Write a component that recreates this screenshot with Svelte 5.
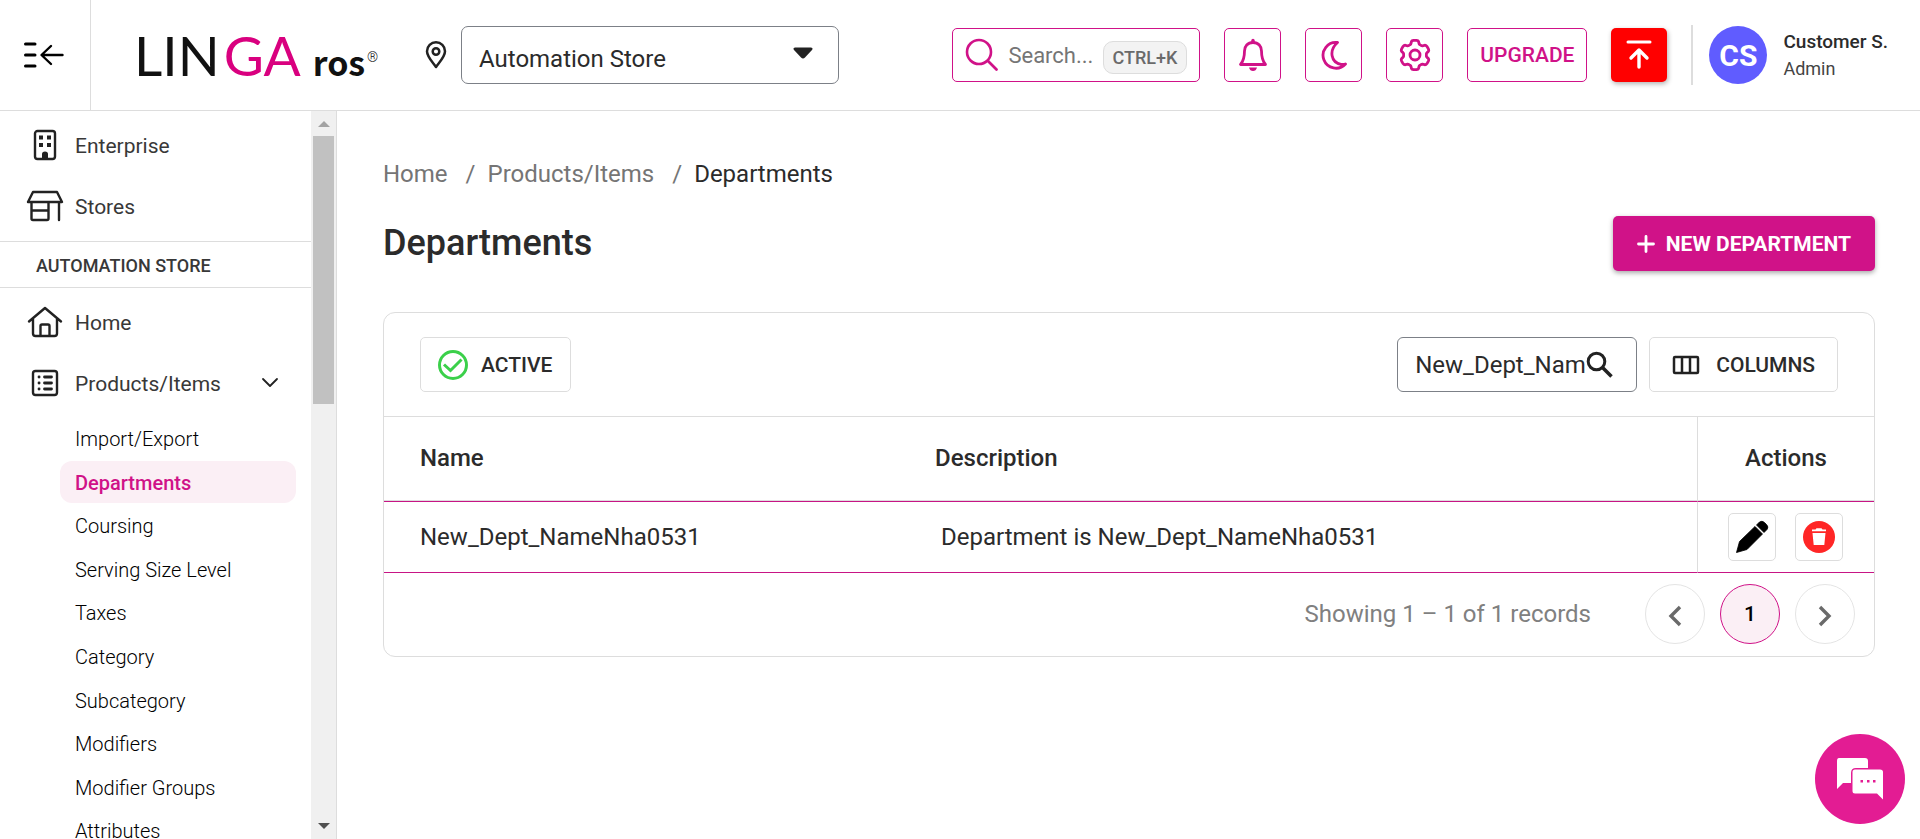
<script>
  const subItems = [
    'Import/Export',
    'Departments',
    'Coursing',
    'Serving Size Level',
    'Taxes',
    'Category',
    'Subcategory',
    'Modifiers',
    'Modifier Groups',
    'Attributes'
  ];
  const active = 'Departments';
  const rows = [
    { name: 'New_Dept_NameNha0531', description: 'Department is New_Dept_NameNha0531' }
  ];
  let filter = $state('New_Dept_NameNha0531');

  // Outline of a six-toothed gear with rounded teeth, centred on 17,17.
  const gear = Array.from({ length: 120 }, (_, i) => {
    const t = (i / 120) * Math.PI * 2;
    const r = 13 + 1.7 * Math.tanh(2.4 * Math.cos(6 * t) + 0.5);
    return `${(17 + r * Math.sin(t)).toFixed(2)} ${(17 - r * Math.cos(t)).toFixed(2)}`;
  }).join('L');
</script>

<div class="app">
  <header class="topbar">
    <button class="menu-toggle" aria-label="Collapse menu">
      <svg width="40" height="28" viewBox="0 0 40 28" fill="none" stroke="#000" stroke-linecap="round" stroke-linejoin="round">
        <path d="M1.5 3H11M1.5 14H11M1.5 25H11" stroke-width="3" />
        <path d="M38.5 14H18M27 5L17.5 14L27 23" stroke-width="2.4" />
      </svg>
    </button>

    <a class="logo" href="#home" aria-label="LINGA ros">
      <span class="logo-main">LIN<span class="pink">GA</span></span>
      <span class="logo-sub">ros</span>
      <span class="logo-reg">®</span>
    </a>

    <div class="store">
      <svg width="22" height="28" viewBox="0 0 22 28" fill="none" stroke="#222">
        <path d="M11 26C8 21.500 2 16 2 10.300A9 9 0 0 1 20 10.300C20 16 14 21.500 11 26Z" stroke-width="2.500" stroke-linejoin="round" />
        <circle cx="11" cy="10.500" r="3.300" stroke-width="2.500" />
      </svg>
      <div class="store-select">
        <select aria-label="Store">
          <option>Automation Store</option>
        </select>
        <svg class="caret" width="20" height="12" viewBox="0 0 20 12"><path d="M2 0.500H18Q20.500 1 19 3L12 10.500Q10 12.500 8 10.500L1 3Q-0.500 1 2 0.500Z" fill="#222" /></svg>
      </div>
    </div>

    <div class="tools">
      <button class="search">
        <svg width="34" height="34" viewBox="0 0 34 34" fill="none" stroke="#d01288" stroke-linecap="round">
          <circle cx="14" cy="14" r="12" stroke-width="2.600" />
          <path d="M23 23L31.500 31.500" stroke-width="2.800" />
        </svg>
        <span>Search...</span>
        <kbd>CTRL+K</kbd>
      </button>
      <button class="tool" aria-label="Notifications">
        <svg width="30" height="34" viewBox="0 0 30 34" fill="none" stroke="#d01288">
          <path d="M15 4.500C9.500 4.500 6.500 8.500 6.500 13C6.500 20 5.500 23 2.500 26.500H27.500C24.500 23 23.500 20 23.500 13C23.500 8.500 20.500 4.500 15 4.500Z" stroke-width="2.800" stroke-linejoin="round" />
          <path d="M15 2.500V4" stroke-width="3.400" stroke-linecap="round" />
          <path d="M11 29.500H19Q18 33 15 33Q12 33 11 29.500Z" fill="#d01288" stroke="none" />
        </svg>
      </button>
      <button class="tool" aria-label="Dark mode">
        <svg width="28" height="32" viewBox="0 0 28 32" fill="none" stroke="#d01288">
          <path d="M17.500 3.500A12.900 12.900 0 1 0 25.500 25Q23.500 25.800 21 25.300C11 23.500 8.500 11.500 17.500 3.500Z" stroke-width="2.800" stroke-linejoin="round" />
        </svg>
      </button>
      <button class="tool" aria-label="Settings">
        <svg width="34" height="34" viewBox="0 0 34 34" fill="none" stroke="#d01288" stroke-width="2.800" stroke-linejoin="round">
          <path d="M{gear}Z" />
          <circle cx="17" cy="17" r="5" />
        </svg>
      </button>
      <button class="upgrade">UPGRADE</button>
      <button class="upload" aria-label="Publish">
        <svg width="28" height="30" viewBox="0 0 28 30" fill="none" stroke="#fff" stroke-width="3" stroke-linecap="round" stroke-linejoin="round">
          <path d="M3 2H25" />
          <path d="M14 27V11M6 18L14 10L22 18" stroke-width="3.400" />
        </svg>
      </button>
      <div class="user">
        <span class="avatar">CS</span>
        <div class="who">
          <strong>Customer S.</strong>
          <span>Admin</span>
        </div>
      </div>
    </div>
  </header>

  <div class="body">
    <aside class="sidebar">
      <nav class="nav">
        <a class="item" href="#enterprise">
          <svg width="38" height="32" viewBox="0 0 38 32" fill="none" stroke="#222">
            <rect x="9" y="2" width="20" height="28" rx="2.500" stroke-width="2.400" />
            <path d="M13 6.500h4v4h-4zM21 6.500h4v4h-4zM13 14h4v4h-4zM21 14h4v4h-4zM16 30V25Q16 22.500 19 22.500Q22 22.500 22 25V30Z" fill="#222" stroke="none" />
          </svg>
          <span>Enterprise</span>
        </a>
        <a class="item" href="#stores">
          <svg width="38" height="32" viewBox="0 0 38 32" fill="none" stroke="#222" stroke-width="2.400" stroke-linejoin="round" stroke-linecap="round">
            <path d="M7 2H31L36 12H2ZM5.500 12.500V28.500Q5.500 30 7 30H21Q22.500 30 22.500 28.500V12.500M5.500 20.500H22.500M33 12.500V30" />
          </svg>
          <span>Stores</span>
        </a>
        <div class="section">AUTOMATION STORE</div>
        <a class="item" href="#home">
          <svg width="38" height="32" viewBox="0 0 38 32" fill="none" stroke="#222" stroke-width="2.400" stroke-linejoin="round" stroke-linecap="round">
            <path d="M3 15.500L19 2L35 15.500M7 13V27.500Q7 30 9.500 30H28.500Q31 30 31 27.500V13M14.500 30V20Q14.500 18.500 16 18.500H22Q23.500 18.500 23.500 20V30" />
          </svg>
          <span>Home</span>
        </a>
        <button class="item">
          <svg width="38" height="32" viewBox="0 0 38 32" fill="none" stroke="#222">
            <rect x="7" y="4" width="24" height="24" rx="2.500" stroke-width="2.400" />
            <path d="M18.500 10H25.500M18.500 16H25.500M18.500 22H25.500M13 10H13.100M13 16H13.100M13 22H13.100" stroke-width="2.800" stroke-linecap="round" />
          </svg>
          <span>Products/Items</span>
          <svg class="chev" width="18" height="12" viewBox="0 0 18 12" fill="none" stroke="#222" stroke-width="1.800" stroke-linecap="round" stroke-linejoin="round"><path d="M2 2L9 9L16 2" /></svg>
        </button>
        <ul class="sub">
          {#each subItems as item}
            <li><a href="#{item}" class:active={item === active}>{item}</a></li>
          {/each}
        </ul>
      </nav>
      <div class="scroll">
        <svg width="12" height="25" viewBox="0 0 12 25"><path d="M6 10L12 16H0Z" fill="#a3a3a3" /></svg>
        <div class="thumb"></div>
        <svg width="12" height="26" viewBox="0 0 12 26"><path d="M0 10H12L6 16Z" fill="#505050" /></svg>
      </div>
    </aside>

    <main class="content">
      <nav class="crumbs" aria-label="Breadcrumb">
        <a href="#home">Home</a><span class="sep">/</span><a href="#products">Products/Items</a><span class="sep">/</span><span class="here">Departments</span>
      </nav>

      <div class="heading">
        <h1>Departments</h1>
        <button class="primary">
          <svg width="18" height="18" viewBox="0 0 18 18" stroke="#fff" stroke-width="2.800" stroke-linecap="round"><path d="M9 1.500V16.500M1.500 9H16.500" /></svg>
          NEW DEPARTMENT
        </button>
      </div>

      <section class="card">
        <div class="toolbar">
          <button class="outline">
            <svg width="30" height="30" viewBox="0 0 30 30" fill="none" stroke="#3bd04a" stroke-width="3"><circle cx="15" cy="15" r="13.500" /><path d="M6 14.500L12.500 20.500L23.500 9.500" /></svg>
            ACTIVE
          </button>
          <div class="right">
            <label class="filter">
              <input type="text" aria-label="Search departments" bind:value={filter} />
              <svg width="28" height="28" viewBox="0 0 28 28" fill="none" stroke="#222"><circle cx="10.500" cy="10.500" r="8.300" stroke-width="3" /><path d="M16.500 16.500L25.500 25.500" stroke-width="3.600" /></svg>
            </label>
            <button class="outline columns">
              <svg width="28" height="20" viewBox="0 0 28 20" fill="none" stroke="#222" stroke-width="2.500"><rect x="2" y="2" width="24" height="16" rx="1" /><path d="M10 2V18M18 2V18" /></svg>
              COLUMNS
            </button>
          </div>
        </div>

        <table>
          <thead>
            <tr><th class="c-name">Name</th><th>Description</th><th class="c-act">Actions</th></tr>
          </thead>
          <tbody>
            {#each rows as row}
              <tr>
                <td>{row.name}</td>
                <td class="desc">{row.description}</td>
                <td class="c-act">
                  <div class="acts">
                    <button class="act" aria-label="Edit">
                      <svg width="34" height="34" viewBox="0 0 34 34"><path d="M1.500 32.500L4.500 21.500L20 6.500L27.500 14L12 29.500ZM21.500 5L24.500 2Q27 0.200 29.500 2.500L31.500 4.500Q34 7 32 9.500L29 12.500Z" fill="#000" stroke="#000" stroke-width="0.800" stroke-linejoin="round" /></svg>
                    </button>
                    <button class="act" aria-label="Delete">
                      <svg width="32" height="32" viewBox="0 0 32 32"><circle cx="16" cy="16" r="16" fill="#ff2626" /><path d="M9 8.500H12.500L13.500 7.200H18.500L19.500 8.500H23V10.300H9ZM9.500 12H22.500L21.300 24H10.700Z" fill="#fff" /></svg>
                    </button>
                  </div>
                </td>
              </tr>
            {/each}
          </tbody>
        </table>

        <div class="pager">
          <span class="count">Showing 1 – 1 of 1 records</span>
          <button class="page" aria-label="Previous page"><svg width="16" height="22" viewBox="0 0 16 22" fill="none" stroke="#6a6a6a" stroke-width="3.400"><path d="M13 2L4 11L13 20" /></svg></button>
          <button class="page current">1</button>
          <button class="page" aria-label="Next page"><svg width="16" height="22" viewBox="0 0 16 22" fill="none" stroke="#6a6a6a" stroke-width="3.400"><path d="M3 2L12 11L3 20" /></svg></button>
        </div>
      </section>
    </main>
  </div>

  <button class="chat" aria-label="Chat">
    <svg width="48" height="44" viewBox="0 0 48 44">
      <path d="M3 1H29Q32 1 32 4V11H20Q15 11 15 16V26H7L1 32V4Q1 1 3 1Z" fill="#fff" />
      <path d="M19 12.500H44Q47 12.500 47 15V42.500L41 36.500H19Q16.500 36.500 16.500 34V15Q16.500 12.500 19 12.500Z" fill="#fff" />
      <path d="M24.500 23h2.500v2.500h-2.500zM31 23h2.500v2.500h-2.500zM37 23h2.500v2.500h-2.500z" fill="#e31c93" />
    </svg>
  </button>
</div>

<style>
  .app {
    height: 100vh;
    display: flex;
    flex-direction: column;
    overflow: hidden;
    background: #fff;
    color: #2b2b2b;
    font-family: Roboto, "Liberation Sans", sans-serif;
  }
  .app, .app * { box-sizing: border-box; }
  button, input, select { font: inherit; color: inherit; margin: 0; }
  button { cursor: pointer; background: #fff; padding: 0; border: 0; }
  a { color: inherit; text-decoration: none; }
  svg { display: block; flex: none; }

  .topbar {
    flex: none;
    height: 111px;
    display: flex;
    align-items: center;
    border-bottom: 1px solid #ddd;
  }
  .menu-toggle {
    align-self: stretch;
    width: 91px;
    padding-left: 24px;
    border-right: 1px solid #ddd;
  }
  .logo { display: flex; align-items: baseline; margin-left: 43px; width: 282px; color: #111; }
  .logo-main { font: 400 55px/64px Lato, sans-serif; }
  .pink { color: #d9007f; margin-left: 4px; }
  .logo-sub { font: 700 34px/40px "Noto Sans CJK SC", "Noto Sans", sans-serif; margin-left: 12px; }
  .logo-reg { align-self: center; font-size: 14px; line-height: 14px; font-weight: 300; margin: 3px 0 0 2px; }

  .store { display: flex; align-items: center; gap: 14px; margin-left: 9px; }
  .store-select { position: relative; width: 378px; height: 58px; }
  .store-select select {
    width: 100%;
    height: 100%;
    appearance: none;
    background: #fff;
    border: 1px solid #7c8087;
    border-radius: 7px;
    padding: 8px 48px 0 17px;
    font-size: 24px;
  }
  .caret { position: absolute; right: 26px; top: 21px; pointer-events: none; }

  .tools { margin-left: auto; display: flex; align-items: center; gap: 24px; padding-right: 32px; }
  .search, .tool, .upgrade { border: 1px solid #d01288; border-radius: 5px; height: 54px; }
  .search {
    width: 248px;
    display: flex;
    align-items: center;
    padding: 0 12px;
    font-size: 22px;
    color: #757575;
  }
  .search span { margin-left: 9px; }
  .search kbd {
    margin: 5px 0 0 auto;
    height: 33px;
    padding: 0 9px;
    border: 1px solid #ddd;
    border-radius: 10px;
    background: #f3f3f3;
    font: 500 18px/31px Roboto, sans-serif;
    color: #6a6a6a;
  }
  .tool { width: 57px; display: grid; place-items: center; }
  .upgrade { width: 120px; font-size: 21px; font-weight: 500; color: #d01288; }
  .upload {
    width: 56px;
    height: 54px;
    display: grid;
    place-items: center;
    border-radius: 5px;
    background: #f00;
    box-shadow: 1px 2px 5px rgba(0, 0, 0, 0.3);
  }
  .user { display: flex; align-items: center; height: 60px; padding-left: 16px; border-left: 2px solid #ddd; }
  .avatar {
    width: 58px;
    height: 58px;
    border-radius: 50%;
    display: grid;
    place-items: center;
    background: #605cff;
    color: #fff;
    font-size: 30px;
    font-weight: 700;
  }
  .who { margin-left: 16px; display: flex; flex-direction: column; font-size: 18px; line-height: 27px; color: #444; }
  .who strong { font-size: 19px; font-weight: 500; color: #2b2b2b; }

  .body { flex: 1; min-height: 0; display: flex; }
  .sidebar { flex: none; width: 337px; display: flex; border-right: 1px solid #ddd; overflow: hidden; }
  .nav { flex: 1; overflow: hidden; padding-top: 4px; }
  .item {
    display: flex;
    align-items: center;
    width: 100%;
    height: 61px;
    padding: 0 32px 2px 26px;
    font-size: 21px;
    color: #383838;
    text-align: left;
  }
  .item span { margin-left: 11px; padding-top: 3px; }
  .chev { margin-left: auto; }
  .section {
    margin: 4px 0;
    height: 47px;
    padding-left: 36px;
    border: solid #ddd;
    border-width: 1px 0;
    font-size: 18px;
    line-height: 47px;
    font-weight: 500;
    color: #383838;
  }
  .sub {
    list-style: none;
    margin: 3px 15px 0 60px;
    padding: 0;
    height: 436px;
    display: grid;
    grid-auto-rows: 1fr;
  }
  .sub a {
    display: block;
    height: 42px;
    padding-left: 15px;
    border-radius: 12px;
    font-size: 20px;
    line-height: 44px;
    font-weight: 300;
    color: #000;
  }
  .sub a.active { background: #fbeff5; color: #d01288; font-weight: 500; }
  .scroll { width: 25px; background: #f0f0f0; display: flex; flex-direction: column; align-items: center; }
  .thumb { width: 21px; height: 268px; margin-bottom: auto; background: #c1c1c1; }

  .content { flex: 1; min-width: 0; padding: 47px 45px 0 46px; }
  .crumbs { display: flex; font-size: 24px; line-height: 32px; color: #757575; }
  .sep { margin: 0 12px 0 18px; }
  .here { color: #2b2b2b; }
  .heading { display: flex; align-items: center; justify-content: space-between; margin: 26px 0 41px; }
  h1 { margin: 0; padding-bottom: 2px; font-size: 36px; line-height: 48px; font-weight: 500; }
  .primary {
    display: flex;
    align-items: center;
    gap: 11px;
    height: 55px;
    padding: 0 24px;
    border-radius: 5px;
    background: #d01288;
    color: #fff;
    font-size: 21px;
    font-weight: 700;
    box-shadow: 0 2px 5px rgba(0, 0, 0, 0.35);
  }
  .card { border: 1px solid #ddd; border-radius: 12px; overflow: hidden; }
  .toolbar { display: flex; justify-content: space-between; padding: 24px 36px; }
  .outline {
    display: flex;
    align-items: center;
    gap: 13px;
    height: 55px;
    padding: 0 18px 0 17px;
    border: 1px solid #ddd;
    border-radius: 5px;
    font-size: 21px;
    font-weight: 500;
  }
  .columns { gap: 16px; padding: 0 22px; }
  .right { display: flex; gap: 12px; }
  .filter {
    display: flex;
    align-items: center;
    width: 240px;
    height: 55px;
    padding: 0 22px 0 17px;
    border: 1px solid #7c8087;
    border-radius: 6px;
  }
  .filter input {
    flex: 1;
    min-width: 0;
    padding: 0;
    border: 0;
    outline: 0;
    background: none;
    font-size: 24px;
  }

  table { width: 100%; border-collapse: separate; border-spacing: 0; table-layout: fixed; font-size: 24px; }
  th, td { padding: 0 0 0 36px; text-align: left; }
  th { height: 85px; border: solid #ddd; border-width: 1px 0; padding: 0 0 2px 35px; font-weight: 500; }
  th:first-child { padding-left: 36px; }
  td { height: 72px; border: solid #c71585; border-width: 1px 0; }
  td.desc { padding-left: 41px; }
  .c-name { width: 516px; }
  th.c-act { width: 177px; padding: 0 0 2px; text-align: center; border-left: 1px solid #ddd; }
  td.c-act { padding: 0 2px 0 0; border-left: 1px solid #ddd; }
  .acts { display: flex; justify-content: center; gap: 19px; }
  .act { width: 48px; height: 48px; display: grid; place-items: center; border: 1px solid #ddd; border-radius: 5px; }

  .pager { display: flex; align-items: center; justify-content: flex-end; gap: 15px; height: 83px; padding: 0 19px 2px 0; }
  .count { margin-right: 39px; font-size: 24px; color: #808080; }
  .page { width: 60px; height: 60px; border: 1px solid #e4e4e4; border-radius: 50%; display: grid; place-items: center; font-size: 21px; }
  .page svg { margin-top: 5px; }
  .current { border-color: #d01288; background: #fbeff5; font-weight: 500; color: #000; }

  .chat {
    position: fixed;
    right: 15px;
    bottom: 15px;
    width: 90px;
    height: 90px;
    border-radius: 50%;
    display: grid;
    place-items: center;
    background: #e31c93;
  }
</style>
